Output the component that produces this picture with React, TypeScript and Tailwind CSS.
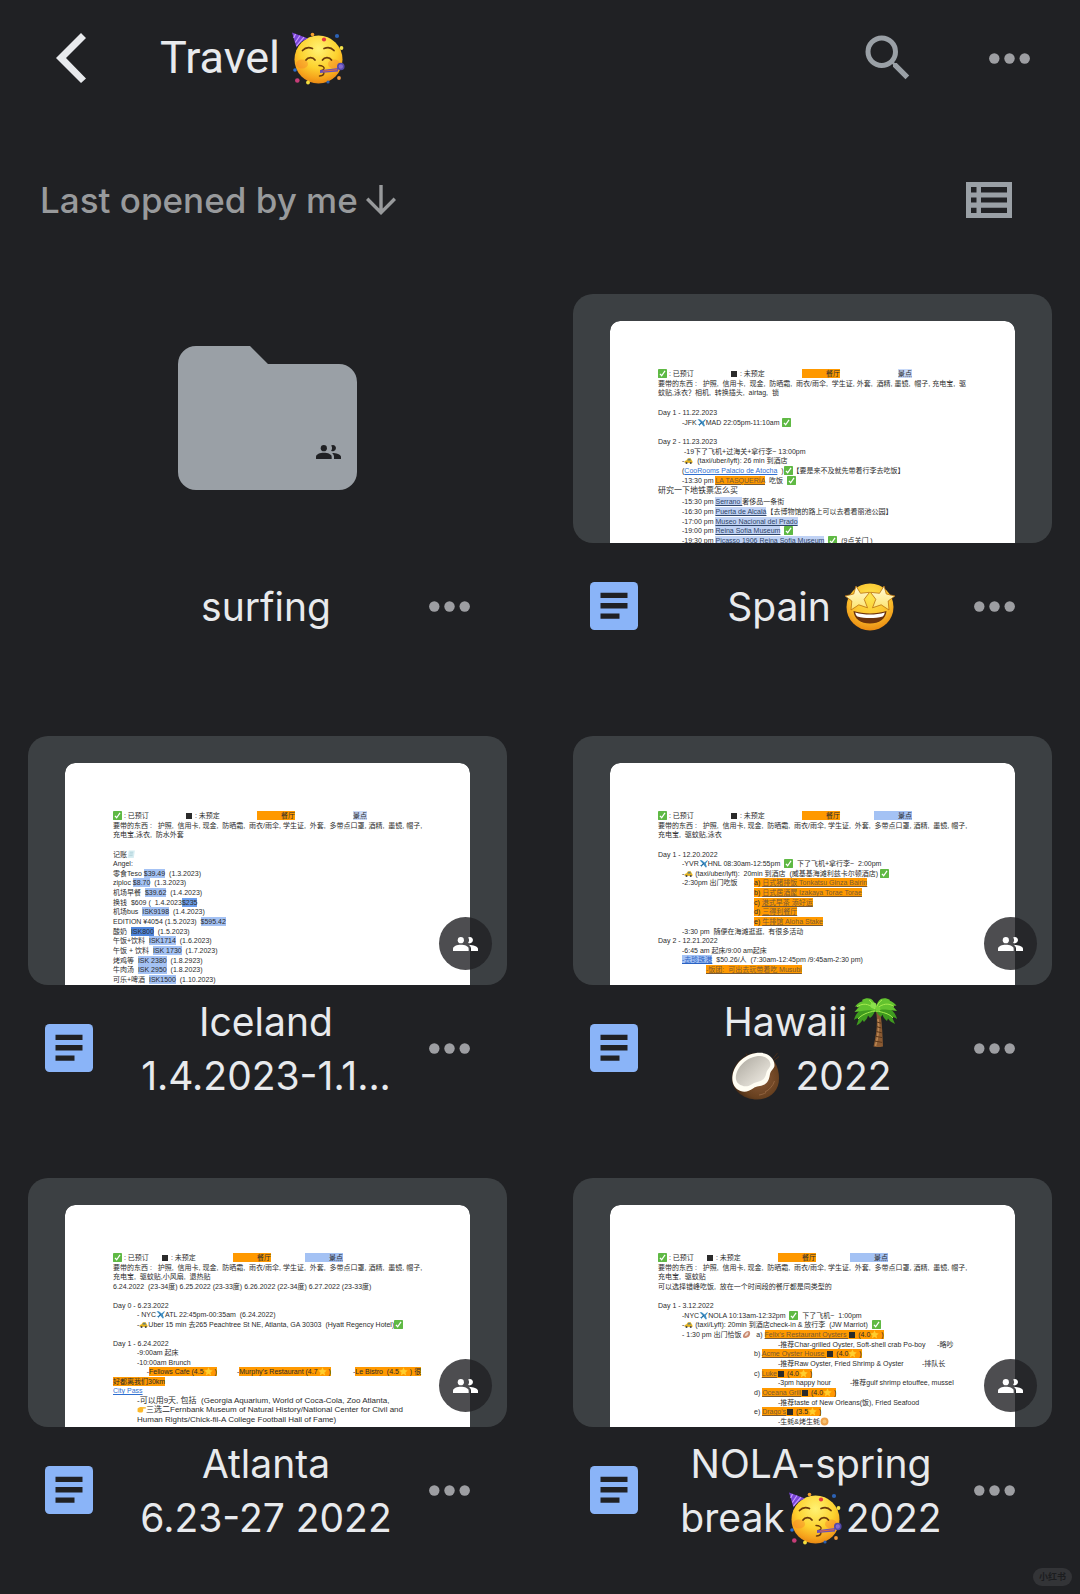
import type { ReactNode } from "react";
import { MdSearch } from "react-icons/md";

/* ---------- interface icons ---------- */

function BackIcon() {
  return (
    <svg viewBox="0 0 30 50" className="h-[50px] w-[30px]" fill="#e8eaed" aria-hidden="true">
      <path d="M0 25 25 0l5 5-20 20 20 20.500-5 4.500z" />
    </svg>
  );
}

function ArrowDownIcon() {
  return (
    <svg viewBox="0 0 30 30" className="h-[30px] w-[30px]" fill="none" stroke="#989a9c" strokeWidth="3.4" aria-hidden="true">
      <path d="M15 0v28M1.200 13.800 15 27.600l13.800-13.800" />
    </svg>
  );
}

function ListIcon() {
  return (
    <svg viewBox="0 0 46 36" className="h-9 w-[46px]" aria-hidden="true">
      <path
        fill="#9aa0a6"
        fillRule="evenodd"
        d="M0 0h46v36H0zM5 5v5.500h5.500V5zM15 5v5.500h26V5zM5 15.500v5h5.500v-5zM15 15.500v5h26v-5zM5 25.700v5.300h5.500v-5.300zM15 25.700v5.300h26v-5.300z"
      />
    </svg>
  );
}

function DotsIcon() {
  return (
    <svg viewBox="0 0 41 11" className="h-[11px] w-[41px]" fill="#9d9ea2" aria-hidden="true">
      <circle cx="5.300" cy="5.500" r="5.200" />
      <circle cx="20.500" cy="5.500" r="5.200" />
      <circle cx="35.700" cy="5.500" r="5.200" />
    </svg>
  );
}

function PeopleIcon({ className }: { className: string }) {
  return (
    <svg viewBox="0 0 75 42" className={className} fill="currentColor" aria-hidden="true">
      <circle cx="23.500" cy="9.500" r="9.300" />
      <path d="M50.500.2a9.300 9.300 0 1 1-5.200 17c4-4.500 4-11 0-15.400A9.300 9.300 0 0 1 50.500.2z" />
      <path d="M0 42v-6.500C0 28 12 23.500 23.500 23.500S47 28 47 35.500V42z" />
      <path d="M54 42v-6.500c0-5-2.300-8.700-6-11.500 12 0 27 4 27 11.500V42z" />
    </svg>
  );
}

function DocIcon() {
  return (
    <svg viewBox="0 0 48 48" className="h-12 w-12" role="img" aria-label="Document">
      <rect width="48" height="48" rx="4.500" fill="#8ab4f8" />
      <path fill="#202124" d="M10.500 10.700h27V16h-27zM10.500 21h27v5.500h-27zM10.500 31.500h19v5.200h-19z" />
    </svg>
  );
}

function FolderIcon() {
  return (
    <svg viewBox="0 0 179 144" className="h-36 w-[179px]" fill="#9aa0a6" role="img" aria-label="Shared folder">
      <path d="M18 0h54l18 18h71a18 18 0 0 1 18 18v90a18 18 0 0 1-18 18H18a18 18 0 0 1-18-18V18A18 18 0 0 1 18 0z" />
    </svg>
  );
}

/* ---------- large emoji ---------- */

function PartyFace({ id }: { id: string }) {
  return (
    <svg viewBox="0 0 53 53" className="h-[53px] w-[53px] shrink-0" role="img" aria-label="partying face">
      <defs>
        <radialGradient id={id} cx="0.5" cy="0.28" r="0.72">
          <stop offset="0" stopColor="#fff273" />
          <stop offset="0.55" stopColor="#fdd22f" />
          <stop offset="0.85" stopColor="#f6a31c" />
          <stop offset="1" stopColor="#e98a14" />
        </radialGradient>
      </defs>
      <circle cx="26.500" cy="27.500" r="24" fill={`url(#${id})`} />
      <ellipse cx="10" cy="32" rx="6" ry="4.500" fill="#f47a2a" opacity="0.4" />
      <ellipse cx="42" cy="32" rx="6" ry="4.500" fill="#f47a2a" opacity="0.4" />
      <path d="M0 .5 16 6.500C11 8 7 11 4.500 15.500z" fill="#7a45d8" />
      <path d="m3.500 2-1.800 4M8 3.500 3.300 10.500M12 5.200 4.500 13.800" stroke="#c79bff" strokeWidth="1.200" />
      <g fill="none" stroke="#6b3a0c" strokeLinecap="round" strokeWidth="1.700">
        <path d="M10.500 18.500c2.500-2.800 6.500-3.500 10-2M32 16.500c3.500-1.500 7.500-.8 10 2" />
        <path d="M14 28c2-3.200 7-3.200 9 0M30.500 28c2-3.200 7-3.200 9 0" />
        <path d="M27 33.500c3.500 0 5.500 1.500 5 3.200-.4 1.200-2 1.800-3.500 2 2.500.3 3.800 1.500 3.300 3-.5 1.600-2 2.300-4.300 2.300" strokeWidth="1.400" />
      </g>
      <path d="m28 38.300 18-2.200v3.400L28 40.900z" fill="#6c50b8" />
      <path d="m31 39.200 14-1.500" stroke="#e06a3c" strokeWidth="1" />
      <circle cx="48.800" cy="34.500" r="3" fill="#8469cf" stroke="#5248a8" strokeWidth="1.600" />
      <circle cx="32" cy="7.500" r="2.100" fill="#e2383f" />
      <circle cx="20.500" cy="2.500" r="1.800" fill="#f6a02c" />
      <circle cx="45" cy="4" r="2.100" fill="#2c62b5" />
      <circle cx="49.500" cy="16" r="1.900" fill="#f5e24a" />
      <circle cx="3" cy="38" r="1.800" fill="#2b6ed0" />
      <circle cx="5.300" cy="48.500" r="2.300" fill="#c73d78" />
      <circle cx="16" cy="50.500" r="1.900" fill="#f3dd3e" />
      <circle cx="36" cy="50" r="1.600" fill="#2b5fb0" />
      <circle cx="47" cy="46" r="1.900" fill="#f29a3c" />
    </svg>
  );
}

function StarFace() {
  return (
    <svg viewBox="0 0 50 48" className="h-12 w-[50px] shrink-0" role="img" aria-label="star-struck">
      <defs>
        <radialGradient id="star-face" cx="0.5" cy="0.3" r="0.72">
          <stop offset="0" stopColor="#fde64c" />
          <stop offset="0.6" stopColor="#fbc02d" />
          <stop offset="1" stopColor="#e8860f" />
        </radialGradient>
        <linearGradient id="star-eye" x1="0" y1="0" x2="0" y2="1">
          <stop offset="0" stopColor="#fffbd8" />
          <stop offset="1" stopColor="#fde36b" />
        </linearGradient>
      </defs>
      <circle cx="25" cy="24" r="23.500" fill="url(#star-face)" />
      <g fill="url(#star-eye)" stroke="#b9700f" strokeWidth="0.800" strokeLinejoin="round">
        <path d="M11 3l4.500 7.300 9-1-5.300 7 3.300 8.500-8.700-3-7.800 5.200.8-9L0 13l8.700-2z" />
        <path d="M39 3l-4.500 7.300-9-1 5.300 7-3.300 8.500 8.700-3 7.800 5.200-.8-9L50 13l-8.700-2z" />
      </g>
      <path d="M8.500 28c10 3.200 23 3.200 33 0-.5 8-7.500 12.500-16.500 12.500S9 36 8.500 28z" fill="#6b330d" />
      <path d="M10.200 29.500c9.600 2.700 20 2.700 29.600 0-.3 1.700-1 3-2.100 3.900-8 2-17.400 2-25.400 0-1.100-.9-1.800-2.200-2.100-3.900z" fill="#fff" />
    </svg>
  );
}

function PalmTree() {
  return (
    <svg viewBox="0 0 45 50" className="h-[50px] w-[45px] shrink-0" role="img" aria-label="palm tree">
      <path d="M23 14c2 11 .500 23-2.500 35.500 3 .8 6.500.8 9.500 0C29.500 37 29 25 27 14z" fill="#8a5a32" />
      <path d="M25 22c1.500 8 0 18-2.500 27" stroke="#b98552" strokeWidth="1.600" fill="none" />
      <path d="m23.800 25 4.300 1.200m-4.300 3.500 4.700 1.300m-5.200 3.500 5.500 1.300m-6.200 3.500 6.400 1.300m-7.200 3.500 7.300 1.300" stroke="#5a371b" strokeWidth="1" />
      <g fill="#3f9b1f">
        <path d="M23 10C14 7 3 13 1 23c2-1.500 3.500-2 5-2L3.500 28.500c3-1.500 5-3.500 6-5.500l1.500 2c2-2 3.500-4 4-6.500l2 2.500c3-2 5-6 6-11z" />
        <path d="M22 10c9-3 20 2 22 12-2-1.500-3.500-2-5-2l3 7c-3-1.500-5.500-3-7-5.500l-1 2.500c-2.500-2-4-4-4.500-6.500L28 20c-3-2-5-5-6-10z" />
      </g>
      <g fill="#62c22f">
        <path d="M22 13C20 3 9 .5 2 9.500l4 .2L1.500 15c6-.5 14-2.500 20.500-2z" />
        <path d="M23 13C25 2 35-.5 43.500 8.500l-4 .5 4.500 5C37 13 29 12 23 13z" />
        <path d="M9 3C15-.5 22 1 23 12 24 1 31-.5 37 3c-2.500 5-6 9-14 12C16 13 12 9 9 3z" />
      </g>
      <path d="M22 12C15 6 9 6 4 10m19 2c7-6 13-6 18-2.500M22 14c-7 1-14 4-17 8m18-8c7 1 14 3 17 7M22 12c-1-4-3-7-6-9m7 9c1-4 3-7 6-9" stroke="#a5ec4e" strokeWidth="1" fill="none" />
      <circle cx="20.500" cy="8.500" r="3" fill="#8be04c" />
      <circle cx="25" cy="12" r="2.400" fill="#74cf38" />
    </svg>
  );
}

function Coconut() {
  return (
    <svg viewBox="0 0 49 48" className="h-12 w-[49px] shrink-0" role="img" aria-label="coconut">
      <defs>
        <radialGradient id="coco-shell" cx="0.6" cy="0.55" r="0.6">
          <stop offset="0" stopColor="#8a5a38" />
          <stop offset="0.7" stopColor="#67401f" />
          <stop offset="1" stopColor="#3f2613" />
        </radialGradient>
        <linearGradient id="coco-milk" x1="0" y1="0" x2="1" y2="1">
          <stop offset="0" stopColor="#a9a59c" />
          <stop offset="0.6" stopColor="#d8d4cb" />
          <stop offset="1" stopColor="#f4f1ea" />
        </linearGradient>
      </defs>
      <path d="M42 6.500 46.500 1M43 8.500l5-4M17 5l-2-3.500" stroke="#4a2d18" strokeWidth="0.900" />
      <path d="M26 1C10 2 0 15 1 28c1 11 12 19.500 25 19.500 13 0 22-8.500 22-21C48 13 41 .5 26 1z" fill="url(#coco-shell)" />
      <path d="M29 .8c8 0 14.500 5.500 14.500 12.200 0 4-3.800 5.200-4.500 9-.8 4.500-1.500 8-5.500 10.500-4 2.300-7.500 1-11.500 4-4 2.800-8 4.200-12.500 2.500C3 36.500.5 30 1.500 23.500 3.500 11 15 .8 29 .8z" fill="#fffdf3" />
      <path d="M29 4c5.500 0 10.500 3.800 10.500 8.500 0 3-3.300 4.800-4.200 8.500-.6 3.500-2 6.100-4.800 7.500-3.500 1.500-6.500 1.500-10 4-3.300 2-6.500 2.500-9.500 1C6 32 4.200 28 5 23.500 7 13.500 17 4 29 4z" fill="url(#coco-milk)" />
      <path d="M34 40c4-2 8-6 9.500-11M28 43c3-.5 5-1.200 7-2.500" stroke="#a87750" strokeWidth="1" fill="none" opacity="0.6" />
    </svg>
  );
}

/* ---------- glyph-sized pictures inside documents ---------- */

const glyph = "inline-block h-[9px] w-[9px] align-[-2px]";

function Check() {
  return (
    <svg viewBox="0 0 16 16" className={glyph} role="img" aria-label="done">
      <rect width="16" height="16" rx="1.500" fill="#5fb944" />
      <path d="m3.500 8.500 3 3.500 6-8.500" fill="none" stroke="#fff" strokeWidth="2.200" />
    </svg>
  );
}
function Plane() {
  return (
    <svg viewBox="0 0 16 16" className={glyph} role="img" aria-label="flight">
      <path d="M1 2h4l5 4 4-3.500c1.500-.8 2 .2 1 1.500L12 8l2 6-2 1-4-5-3 3v2l-1.500-2.500L1 11l3-.5L6.500 8z" fill="#3f8fc4" />
      <path d="M9 7 4 12" stroke="#2a5f8d" strokeWidth="1.500" />
    </svg>
  );
}
function Taxi() {
  return (
    <svg viewBox="0 0 16 16" className={glyph} role="img" aria-label="taxi">
      <path d="M1 12V9l3-1 3-4h5l2 4 1 1v3.500z" fill="#e5b21c" />
      <path d="M6 8l2-3h3l1.500 3z" fill="#5d7f86" />
      <circle cx="4.500" cy="12.500" r="1.800" fill="#444" />
      <circle cx="12" cy="12.500" r="1.800" fill="#444" />
    </svg>
  );
}
function Star() {
  return (
    <svg viewBox="0 0 16 16" className={glyph} role="img" aria-label="stars">
      <path d="m8 .5 2.200 5 5.300.5-4 3.600 1.200 5.400L8 12.200 3.300 15l1.200-5.400-4-3.600 5.300-.5z" fill="#ffce2e" />
    </svg>
  );
}
function Point() {
  return (
    <svg viewBox="0 0 16 16" className={glyph} role="img" aria-label="pointing right">
      <path d="M1 6c2-2 4-3 6-2.500l8 .5c1.300.3 1.300 2 0 2.200L10 6.500c1.500.5 1.500 2 .5 2.500 1 .8.800 2-.3 2.300.5 1-.2 2-1.700 2H4L1 12z" fill="#fbb829" />
    </svg>
  );
}
function Oyster() {
  return (
    <svg viewBox="0 0 16 16" className={glyph} role="img" aria-label="oyster">
      <path d="M2 13C0 8 7 1 13 2c3 3 1 9-3 11-3 1.500-6 1.500-8 0z" fill="#c98a72" />
      <path d="M5 11c0-4 3-7 6-7 1 3-2 7-6 7z" fill="#f1dcd2" />
    </svg>
  );
}
function Receipt() {
  return (
    <svg viewBox="0 0 16 16" className={glyph} role="img" aria-label="receipt">
      <path d="M3 1h11l-2 13H1z" fill="#d7edf2" />
      <path d="M5 4h6M4.500 7h6M4 10h6" stroke="#9cc3cd" strokeWidth="1" />
    </svg>
  );
}
function Cookie() {
  return (
    <svg viewBox="0 0 16 16" className={glyph} role="img" aria-label="cookie">
      <circle cx="8" cy="8" r="7" fill="#eda24a" />
      <circle cx="8" cy="8" r="3.500" fill="#f7c373" />
    </svg>
  );
}
function Square() {
  return (
    <svg viewBox="0 0 8 8" className="inline-block h-2 w-2 align-[-2px]" role="img" aria-label="open">
      <rect x="1" y="1" width="6" height="6" fill="#2b2b2b" />
    </svg>
  );
}

/* ---------- document thumbnails ---------- */

function O({ children }: { children: ReactNode }) {
  return <mark className="bg-[#ff9900] py-px text-inherit">{children}</mark>;
}
function B({ children }: { children: ReactNode }) {
  return <mark className="bg-[#a4c2f4] py-px text-inherit">{children}</mark>;
}
function P({ children }: { children: ReactNode }) {
  return <mark className="bg-[#c9daf8] py-px text-inherit">{children}</mark>;
}
function OA({ children }: { children: ReactNode }) {
  return <a href="#" className="bg-[#ff9900] py-px text-[#7a5a34] underline">{children}</a>;
}
function PA({ children }: { children: ReactNode }) {
  return <a href="#" className="bg-[#c0d2f4] py-px text-[#2f4568] underline">{children}</a>;
}
function LA({ children }: { children: ReactNode }) {
  return <a href="#" className="text-[#2f6fd0] underline">{children}</a>;
}

function Page({ lines, height, tall }: { lines: ReactNode[]; height: string; tall?: number }) {
  return (
    <div className="h-full rounded-t-[10px] bg-white pt-12 pl-12">
      <div
        className={`flex flex-col justify-between font-['Liberation_Sans','Noto_Sans_CJK_SC',sans-serif] text-[7px] whitespace-pre text-[#2c2c2c] [tab-size:24px] ${height}`}
      >
        {lines.map((line, i) => (
          <p key={i} className={i === tall ? "h-[11px] leading-[11px]" : "h-[9px] leading-[9px]"}>
            {line}
          </p>
        ))}
      </div>
    </div>
  );
}

const spain: ReactNode[] = [
  <><Check />{" : 已预订\t\t"}<Square />{" : 未预定\t\t"}<O>{"\t餐厅"}</O>{"\t\t\t"}<P>景点</P></>,
  "要带的东西 :   护照,  信用卡,  现金,  防晒霜,  雨衣/雨伞,  学生证, 外套,  酒精, 墨镜,  帽子, 充电宝,  驱",
  "蚊贴,泳衣？相机,  转换插头,  airtag,  锁",
  "",
  "Day 1 - 11.22.2023",
  <>{"\t-JFK"}<Plane />{"MAD 22:05pm-11:10am "}<Check /></>,
  "",
  "Day 2 - 11.23.2023",
  "\t -19下了飞机+过海关+拿行李~ 13:00pm",
  <>{"\t-"}<Taxi />{"  (taxi/uber/lyft): 26 min 到酒店"}</>,
  <>{"\t("}<LA>CooRooms Palacio de Atocha</LA>{"  )"}<Check />{"【要是来不及就先带着行李去吃饭】"}</>,
  <>{"\t-13:30 pm "}<OA>LA TASQUERÍA</OA>{"  吃饭  "}<Check /></>,
  <span className="text-[8px]">研究一下地铁票怎么买</span>,
  <>{"\t-15:30 pm "}<PA>{"Serrano "}</PA>奢侈品一条街</>,
  <>{"\t-16:30 pm "}<PA>Puerta de Alcalá</PA>{"【去博物馆的路上可以去看看丽池公园】"}</>,
  <>{"\t-17:00 pm "}<PA>Museo Nacional del Prado</PA></>,
  <>{"\t-19:00 pm "}<PA>Reina Sofia Museum</PA>{"  "}<Check /></>,
  <>{"\t-19:30 pm "}<PA>Picasso 1906 Reina Sofia Museum</PA>{"  "}<Check />{"  (9点关门 )"}</>,
];

const packing =
  "要带的东西 :   护照,  信用卡, 现金,  防晒霜,  雨衣/雨伞, 学生证,  外套,  多带点口罩, 酒精,  墨镜, 帽子,";

const iceland: ReactNode[] = [
  <><Check />{" : 已预订\t\t"}<Square />{" : 未预定\t\t"}<O>{"\t餐厅"}</O>{"\t\t\t"}<P>景点</P></>,
  packing,
  "充电宝,泳衣,  防水外套",
  "",
  <>记账<Receipt /></>,
  "Angel:",
  <>{"零食Teso "}<B>$39.49</B>{"  (1.3.2023)"}</>,
  <>{"ziploc "}<B>$8.70</B>{"  (1.3.2023)"}</>,
  <>{"机场早餐  "}<B>$39.62</B>{"  (1.4.2023)"}</>,
  <>{"换钱  $609 (  1.4.2023"}<mark className="bg-[#6d9eeb] py-px text-inherit">$235</mark></>,
  <>{"机场bus  "}<B>ISK9198</B>{"  (1.4.2023)"}</>,
  <>{"EDITION ¥4054 (1.5.2023)  "}<B>$595.42</B></>,
  <>{"酸奶  "}<mark className="bg-[#4f86dd] py-px text-inherit">ISK800</mark>{"  (1.5.2023)"}</>,
  <>{"午饭+饮料  "}<B>ISK1714</B>{"  (1.6.2023)"}</>,
  <>{"午饭 + 饮料  "}<B>ISK 1730</B>{"  (1.7.2023)"}</>,
  <>{"烤鸡等  "}<B>ISK 2380</B>{"  (1.8.2923)"}</>,
  <>{"牛肉汤  "}<B>ISK 2950</B>{"  (1.8.2023)"}</>,
  <>{"可乐+啤酒  "}<B>ISK1500</B>{"  (1.10.2023)"}</>,
];

const hawaii: ReactNode[] = [
  <><Check />{" : 已预订\t\t"}<Square />{" : 未预定\t\t"}<O>{"\t餐厅"}</O>{"\t\t"}<B>{"\t景点"}</B></>,
  packing,
  "充电宝,  驱蚊贴,泳衣",
  "",
  "Day 1 - 12.20.2022",
  <>{"\t-YVR"}<Plane />{"HNL 08:30am-12:55pm  "}<Check />{"  下了飞机+拿行李~  2:00pm"}</>,
  <>{"\t-"}<Taxi />{" (taxi/uber/lyft):  20min 到酒店  (威基基海滩利兹卡尔顿酒店) "}<Check /></>,
  <>{"\t-2:30pm 出门吃饭\t"}<O>{"a) "}</O><OA>日式猪排饭 Tonkatsu Ginza Bairin</OA></>,
  <>{"\t\t\t\t"}<O>{"b) "}</O><OA>日式居酒屋 Izakaya Torae Torae</OA></>,
  <>{"\t\t\t\t"}<O>{"c) "}</O><OA>港式早茶 添好运</OA></>,
  <>{"\t\t\t\t"}<O>{"d) "}</O><OA>三得利餐厅</OA></>,
  <>{"\t\t\t\t"}<O>{"e) "}</O><OA>牛排馆 Aloha Stake</OA></>,
  "\t-3:30 pm  随便在海滩逛逛,  有很多活动",
  "Day 2 - 12.21.2022",
  "\t-6:45 am 起床/9:00 am起床",
  <>{"\t"}<a href="#" className="bg-[#a4c2f4] py-px text-[#2a62c4] underline">-去珍珠港</a>{"  $50.26/人  (7:30am-12:45pm /9:45am-2:30 pm)"}</>,
  <>{"\t\t"}<OA>-饭团:  可出去玩带着吃 Musubi</OA></>,
];

const atlanta: ReactNode[] = [
  <><Check />{" : 已预订\t"}<Square />{" : 未预定\t\t"}<O>{"\t餐厅"}</O>{"\t\t"}<B>{"\t景点"}</B></>,
  packing,
  "充电宝,  驱蚊贴,小风扇,  退热贴",
  "6.24.2022  (23-34度) 6.25.2022 (23-33度) 6.26.2022 (22-34度) 6.27.2022 (23-33度)",
  "",
  "Day 0 - 6.23.2022",
  <>{"\t- NYC"}<Plane />{"ATL 22:45pm-00:35am  (6.24.2022)"}</>,
  <>{"\t-"}<Taxi />{"Uber 15 min 去265 Peachtree St NE, Atlanta, GA 30303  (Hyatt Regency Hotel)"}<Check /></>,
  "",
  "Day 1 - 6.24.2022",
  "\t-9:00am 起床",
  "\t-10:00am Brunch",
  <>{"\t     -"}<O>{"Fellows Cafe (4.5"}<Star />{" )"}</O>{"\t  -"}<O>{"Murphy's Restaurant (4.7"}<Star />{" )"}</O>{"\t-"}<O>{"Le Bistro  (4.5"}<Star />{" ) 很"}</O></>,
  <O>好都离我们30km</O>,
  <LA>City Pass</LA>,
  <span className="text-[8px]">{"\t-可以用9天, 包括  (Georgia Aquarium, World of Coca-Cola, Zoo Atlanta,"}</span>,
  <span className="text-[8px]">{"\t"}<Point />三选二Fernbank Museum of Natural History/National Center for Civil and</span>,
  <span className="text-[8px]">{"\tHuman Rights/Chick-fil-A College Football Hall of Fame)"}</span>,
];

const nola: ReactNode[] = [
  <><Check />{" : 已预订\t"}<Square />{" : 未预定\t\t"}<O>{"\t餐厅"}</O>{"\t\t"}<B>{"\t景点"}</B></>,
  packing,
  "充电宝,  驱蚊贴",
  "可以选择错峰吃饭,  放在一个时间段的餐厅都是同类型的",
  "",
  "Day 1 - 3.12.2022",
  <>{"\t-NYC"}<Plane />{"NOLA 10:13am-12:32pm  "}<Check />{"  下了飞机~  1:00pm"}</>,
  <>{"\t-"}<Taxi />{" (taxi/Lyft): 20min 到酒店check-in & 放行李  (JW Marriot)  "}<Check /></>,
  <>{"\t- 1:30 pm 出门恰饭"}<Oyster />{"   a) "}<OA>{"Felix's Restaurant Oysters "}</OA><O><Square />{" (4.0"}<Star />{" )"}</O></>,
  "\t\t\t\t\t-推荐Char-grilled Oyster, Soft-shell crab Po-boy      -略吵",
  <>{"\t\t\t\tb) "}<OA>{"Acme Oyster House "}</OA><O><Square />{" (4.0"}<Star />{" )"}</O></>,
  "\t\t\t\t\t-推荐Raw Oyster, Fried Shrimp & Oyster\t-排队长",
  <>{"\t\t\t\tc) "}<OA>Luke</OA><O><Square />{" (4.0"}<Star />{" )"}</O></>,
  "\t\t\t\t\t-3pm happy hour\t-推荐gulf shrimp etouffee, mussel",
  <>{"\t\t\t\td) "}<OA>Oceana Grill</OA><O><Square />{" (4.0"}<Star />{" )"}</O></>,
  "\t\t\t\t\t-推荐taste of New Orleans(饭), Fried Seafood",
  <>{"\t\t\t\te) "}<OA>Drago's</OA><O><Square />{" (3.5"}<Star />{" )"}</O></>,
  <>{"\t\t\t\t\t-生蚝&烤生蚝"}<Cookie /></>,
];

/* ---------- tiles ---------- */

type TileProps = { name: string; title: ReactNode[]; folder?: boolean; shared?: boolean; children?: ReactNode };

function Tile({ name, title, folder, shared, children }: TileProps) {
  return (
    <article>
      {folder ? (
        <div className="flex h-[249px] items-center justify-center pb-0.5">
          <div className="relative">
            <FolderIcon />
            <PeopleIcon className="absolute right-4 bottom-[31px] h-3.5 w-[25px] text-[#202124]" />
          </div>
        </div>
      ) : (
        <div className="relative h-[249px] overflow-hidden rounded-[20px] bg-[#3c4043]">
          <div className="mx-[37px] mt-[27px] h-[222px] overflow-hidden rounded-t-[10px]">{children}</div>
          {shared && (
            <span className="absolute right-[15px] bottom-[15px] flex h-[53px] w-[53px] items-center justify-center rounded-full bg-[#202124]/80 text-white">
              <PeopleIcon className="h-3.5 w-[25px]" />
            </span>
          )}
        </div>
      )}
      <div className="grid h-32 grid-cols-[82px_1fr_85px] items-center">
        <div className="pb-0.5 pl-[17px]">{!folder && <DocIcon />}</div>
        <h2 className="-mx-6 text-[39px] leading-[54px] text-[#e8eaed]">
          {title.map((line, i) => (
            <span key={i} className="flex h-[54px] items-center justify-center whitespace-nowrap">
              {line}
            </span>
          ))}
        </h2>
        <button type="button" aria-label={`More options for ${name}`} className="relative flex h-12 items-center pb-0.5 pl-[7px]">
          <DotsIcon />
        </button>
      </div>
    </article>
  );
}

export default function App() {
  return (
    <div className="relative min-h-screen bg-[#202124] pb-[39px] font-['Inter','Noto_Sans_CJK_SC',sans-serif]">
      <header className="flex h-[116px] items-center pr-[50px] pl-14">
        <button type="button" aria-label="Back">
          <BackIcon />
        </button>
        <h1 className="ml-[74px] flex flex-1 items-center gap-3 font-['Roboto',sans-serif] text-[45px] leading-[54px] text-[#e8eaed]">
          Travel
          <PartyFace id="party-header" />
        </h1>
        <button type="button" aria-label="Search" className="mr-[71px] text-[#9aa0a6]">
          <MdSearch className="h-[60px] w-[60px]" />
        </button>
        <button type="button" aria-label="More options" className="flex h-12 items-center">
          <DotsIcon />
        </button>
      </header>

      <div className="flex h-[168px] items-center justify-between pr-[68px] pl-10">
        <button type="button" className="flex items-center gap-2 text-[35px] leading-[42px] font-medium text-[#989a9c]">
          Last opened by me
          <ArrowDownIcon />
        </button>
        <button type="button" aria-label="List view">
          <ListIcon />
        </button>
      </div>

      <main className="grid grid-cols-2 gap-x-[66px] gap-y-[65px] px-7 pt-2.5">
        <Tile name="surfing" folder title={["surfing"]} />
        <Tile name="Spain" title={[<>Spain<span className="ml-3.5"><StarFace /></span></>]}>
          <Page lines={spain} height="h-[176px]" tall={12} />
        </Tile>
        <Tile name="Iceland" shared title={["Iceland", "1.4.2023-1.1..."]}>
          <Page lines={iceland} height="h-[173px]" />
        </Tile>
        <Tile name="Hawaii" shared title={[<>Hawaii<span className="ml-1.5"><PalmTree /></span></>, <><Coconut /><span className="ml-4">2022</span></>]}>
          <Page lines={hawaii} height="h-[163px]" />
        </Tile>
        <Tile name="Atlanta" shared title={["Atlanta", "6.23-27 2022"]}>
          <Page lines={atlanta} height="h-[171px]" />
        </Tile>
        <Tile name="NOLA" shared title={["NOLA-spring", <>break<span className="mx-1"><PartyFace id="party-nola" /></span>2022</>]}>
          <Page lines={nola} height="h-[173px]" />
        </Tile>
      </main>

      <span className="absolute right-2 bottom-2 rounded-full bg-[#333437] px-1.5 text-[9px] leading-[18px] font-bold text-[#1c1d1f]">
        小红书
      </span>
    </div>
  );
}
